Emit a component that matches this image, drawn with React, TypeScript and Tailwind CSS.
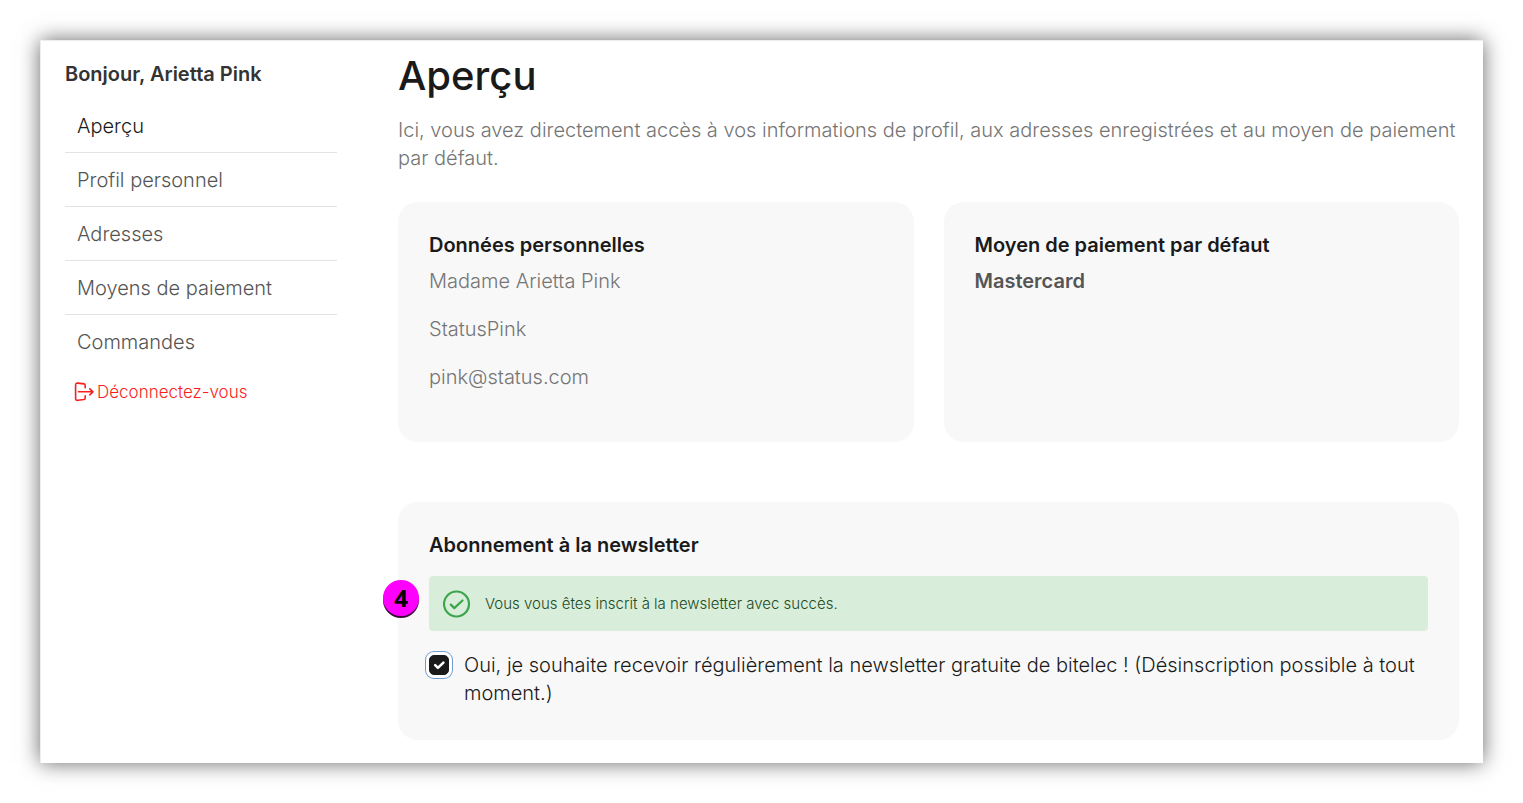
import { useState } from 'react'

const links = [
  { label: 'Aperçu', active: true },
  { label: 'Profil personnel' },
  { label: 'Adresses' },
  { label: 'Moyens de paiement' },
  { label: 'Commandes' },
]

function LogoutIcon() {
  return (
    <svg
      className="h-5 w-5"
      viewBox="0 0 20 20"
      fill="none"
      stroke="currentColor"
      strokeWidth="1.6"
      strokeLinecap="round"
      strokeLinejoin="round"
      aria-hidden="true"
    >
      <path d="M11.2 5.8V3.4c0-.8-.4-1.3-1.200-1.500L4 1.100C2.400 1 1.600 1.600 1.600 3v13.600c0 1.300.9 2 2.500 1.700l5.900-.8c.8-.2 1.200-.7 1.200-1.500v-2.300" />
      <path d="M4.600 9.800h14.400M15.800 6.800l3.200 3-3.200 3" />
    </svg>
  )
}

function Sidebar() {
  return (
    <aside className="w-68 shrink-0 pt-[19px]">
      <p className="text-xl leading-7 font-semibold text-[#333]">Bonjour, Arietta Pink</p>
      <nav className="mt-[11px]">
        <ul className="divide-y divide-[#e3e3e3]">
          {links.map((link) => (
            <li key={link.label}>
              <a
                href="#"
                className={`block px-3 pt-[13px] pb-3 text-xl leading-7 ${link.active ? 'text-[#1a1a1a]' : 'text-[#555]'}`}
              >
                {link.label}
              </a>
            </li>
          ))}
        </ul>
      </nav>
      <a href="#" className="mt-[10px] flex items-center gap-[3px] pl-[9px] text-[17px] leading-7 text-[#fa1e1e]">
        <LogoutIcon />
        Déconnectez-vous
      </a>
    </aside>
  )
}

function Newsletter() {
  const [checked, setChecked] = useState(true)

  return (
    <section className="mt-15 rounded-[20px] bg-[#f8f8f8] px-[31px] pt-[29px] pb-[33px] text-xl leading-7">
      <h2 className="font-semibold text-[#1a1a1a]">Abonnement à la newsletter</h2>
      <div className="relative mt-[17px] flex min-h-[55px] items-center gap-[14px] rounded bg-[#d8edda] px-[14px] text-[#1c4a24]">
        <span className="absolute top-1 -left-[46px] flex h-9 w-9 items-center justify-center rounded-full bg-[#ff00ff] font-[family-name:'Open_Sans',sans-serif] text-2xl font-bold text-black shadow-[0_2px_0_#3a0a3a]">
          4
        </span>
        <svg
          className="h-7 w-7"
          viewBox="0 0 28 28"
          fill="none"
          stroke="#3aa54b"
          strokeWidth="2.2"
          strokeLinecap="round"
          strokeLinejoin="round"
          aria-hidden="true"
        >
          <circle cx="13.5" cy="14" r="12.5" />
          <path d="m7.8 14.6 3.5 3.5 8.2-7.6" />
        </svg>
        <p role="status" className="text-[15px] leading-7">
          Vous vous êtes inscrit à la newsletter avec succès.
        </p>
      </div>
      <div className="mt-5 flex items-start gap-[15px]">
        <span className="relative mt-1 flex h-5 w-5 shrink-0">
          <input
            id="newsletter"
            type="checkbox"
            checked={checked}
            onChange={(e) => setChecked(e.target.checked)}
            className="peer h-5 w-5 appearance-none rounded-[5px] border border-[#1a1a1a] bg-white shadow-[0_0_0_3px_#fff,0_0_0_4px_#6f9bd1] checked:bg-[#1a1a1a]"
          />
          <svg
            className="pointer-events-none absolute inset-0 h-5 w-5 opacity-0 peer-checked:opacity-100"
            viewBox="0 0 20 20"
            fill="none"
            stroke="#fff"
            strokeWidth="2.6"
            strokeLinecap="round"
            strokeLinejoin="round"
            aria-hidden="true"
          >
            <path d="m6.2 10.2 2.7 2.7 5.500-5.300" />
          </svg>
        </span>
        <label htmlFor="newsletter" className="text-[#1a1a1a]">
          Oui, je souhaite recevoir régulièrement la newsletter gratuite de bitelec ! (Désinscription possible à tout
          moment.)
        </label>
      </div>
    </section>
  )
}

export default function App() {
  return (
    <div className="min-h-screen bg-white p-10 font-[Inter,sans-serif] font-light">
      <div className="flex gap-[61px] border-t border-l border-[#ededed] bg-white pr-6 pb-[23px] pl-6 shadow-[0_0_20px_rgba(0,0,0,0.6)]">
        <Sidebar />
        <main className="min-w-0 flex-1 pt-[11px]">
          <h1 className="text-[40px] leading-12 font-medium text-[#1a1a1a]">Aperçu</h1>
          <p className="mt-4 text-xl leading-7 text-[#757575]">
            Ici, vous avez directement accès à vos informations de profil, aux adresses enregistrées et au moyen de
            paiement par défaut.
          </p>
          <div className="mt-[30px] grid grid-cols-2 gap-[30px]">
            <section className="rounded-[20px] bg-[#f8f8f8] px-[31px] pt-[29px] pb-[51px] text-xl leading-7">
              <h2 className="font-semibold text-[#1a1a1a]">Données personnelles</h2>
              <div className="mt-2 space-y-5 text-[#757575]">
                <p>Madame Arietta Pink</p>
                <p>StatusPink</p>
                <p>pink@status.com</p>
              </div>
            </section>
            <section className="rounded-[20px] bg-[#f8f8f8] px-[31px] pt-[29px] pb-[51px] text-xl leading-7">
              <h2 className="font-semibold text-[#1a1a1a]">Moyen de paiement par défaut</h2>
              <p className="mt-2 font-semibold text-[#555]">Mastercard</p>
            </section>
          </div>
          <Newsletter />
        </main>
      </div>
    </div>
  )
}
